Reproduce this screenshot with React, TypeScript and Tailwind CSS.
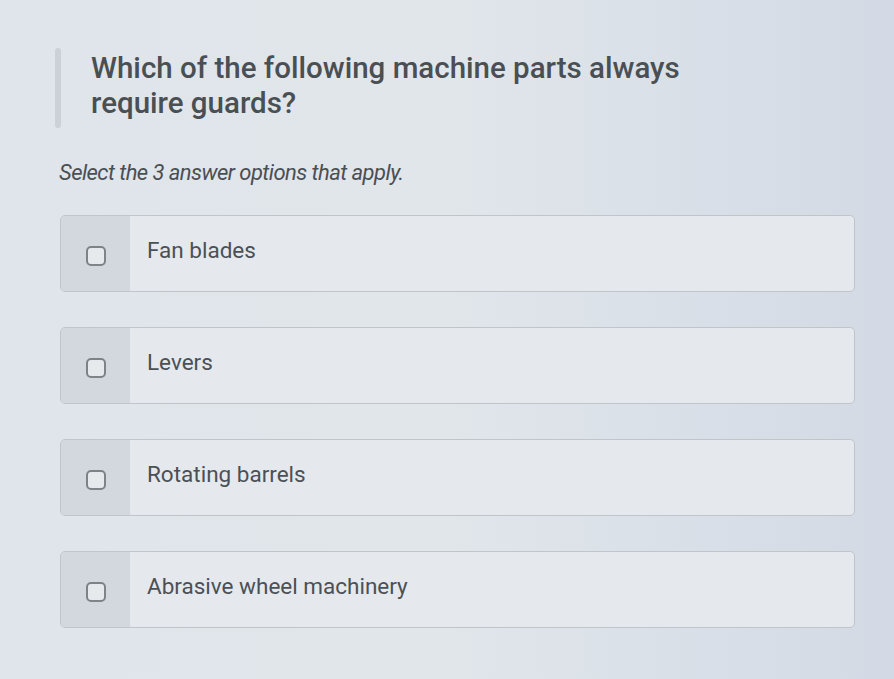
const OPTIONS = ["Fan blades", "Levers", "Rotating barrels", "Abrasive wheel machinery"];

function OptionRow({ label }: { label: string }) {
  return (
    <label className="flex h-[77px] w-[795px] cursor-pointer overflow-hidden rounded-[5px] border border-[#bfc5ca] bg-[#e5e9ed]">
      <div className="flex w-[69px] shrink-0 items-center justify-center bg-[#d2d8dd]">
        <span className="mt-[4px] h-[20px] w-[20px] rounded-[5px] border-2 border-[#7d8388] bg-[#e6eaed]" />
      </div>
      <div className="pl-[17px] pt-[21px] text-[22.5px] leading-[26px] text-[#4b5056]">{label}</div>
    </label>
  );
}

export default function App() {
  return (
    <div
      className="min-h-[679px] w-[894px] bg-gradient-to-r from-[#dfe5ea] via-[#e1e6eb] to-[#d3dae5] pt-[48px]"
      style={{ fontFamily: "Roboto, 'Noto Sans', sans-serif" }}
    >
      <div className="ml-[55px] flex items-start">
        <div className="h-[80px] w-[6px] rounded-sm bg-[#cbd1d6]" />
        <h1 className="pl-[30px] pt-[3px] text-[29.5px] font-medium leading-[35px] text-[#4a4f54]">
          Which of the following machine parts always
          <br />
          require guards?
        </h1>
      </div>
      <p className="ml-[59px] mt-[31px] text-[22px] leading-[28px] italic tracking-tight text-[#4a4f54]">
        Select the 3 answer options that apply.
      </p>
      <div className="ml-[60px] mt-[28px] flex flex-col gap-[35px]">
        {OPTIONS.map((o) => (
          <OptionRow key={o} label={o} />
        ))}
      </div>
    </div>
  );
}
